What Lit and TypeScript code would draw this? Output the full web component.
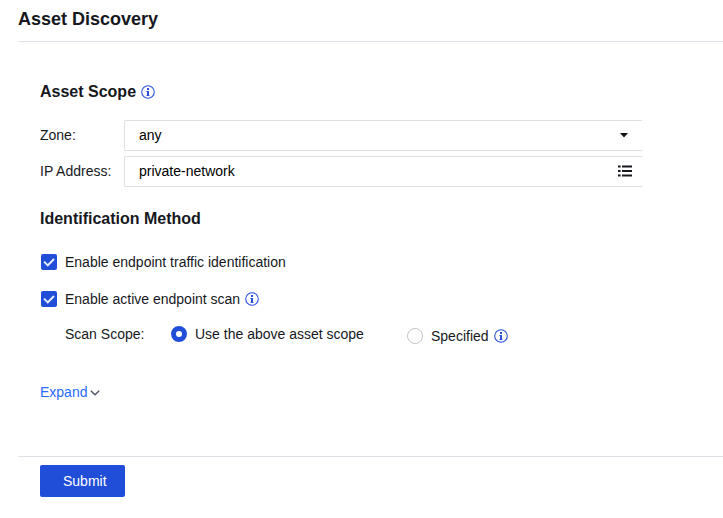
import { LitElement, html, css, svg } from "lit";
import { customElement, state } from "lit/decorators.js";

@customElement("info-icon")
export class InfoIcon extends LitElement {
  static styles = css`
    :host {
      display: inline-flex;
      flex: none;
      color: #2a50dc;
    }
    svg {
      display: block;
    }
  `;

  render() {
    return html`<svg width="14" height="14" viewBox="0 0 14 14" aria-hidden="true">
      ${svg`
        <circle cx="7" cy="7" r="6.3" fill="none" stroke="currentColor" stroke-width="1.1" />
        <path d="M6 3h2v2H6zM5.4 6H8v5H6V6.9h-.6zM5.4 10.3h3.2v.7H5.4z" fill="currentColor" />
      `}
    </svg>`;
  }
}

@customElement("app-root")
export class AppRoot extends LitElement {
  @state() private scope = "above";

  static styles = css`
    :host {
      display: block;
      background: #fff;
      color: #16181d;
      font: 14px/20px "Liberation Sans", Arial, sans-serif;
    }
    * {
      box-sizing: border-box;
    }
    .page {
      padding-left: 18px;
    }
    h1,
    h2 {
      margin: 0;
      font-weight: bold;
    }
    h1 {
      padding: 7px 0 10px;
      border-bottom: 1px solid #dfe1e9;
      font-size: 18px;
      line-height: 24px;
    }
    h2 {
      display: flex;
      align-items: center;
      gap: 5px;
      font-size: 16px;
    }
    .content {
      padding: 40px 81px 54px 22px;
    }
    .fields {
      display: grid;
      grid-template-columns: 84px 1fr;
      row-gap: 5px;
      align-items: center;
      margin: 18px 0 22px;
    }
    .fields > label {
      padding-bottom: 2px;
    }
    .control {
      display: flex;
      position: relative;
    }
    select,
    input[type="text"] {
      appearance: none;
      width: 100%;
      height: 31px;
      margin: 0;
      padding: 0 40px 2px 14px;
      border: 1px solid #dedfe1;
      border-right: 0;
      border-radius: 2px 0 0 2px;
      background: #fff;
      color: #000;
      font: inherit;
      outline: none;
    }
    .caret {
      position: absolute;
      right: 14px;
      top: 13px;
      pointer-events: none;
    }
    .picker {
      position: absolute;
      right: 10px;
      top: 9px;
      padding: 0;
      border: 0;
      background: none;
      color: #16181d;
    }
    svg {
      display: block;
    }
    .option,
    .choice {
      display: flex;
      align-items: center;
      gap: 8px;
    }
    .options {
      display: flex;
      flex-direction: column;
      gap: 17px;
      margin-top: 23px;
      padding-left: 1px;
    }
    .option info-icon,
    .choice info-icon {
      margin-left: -3px;
    }
    input[type="checkbox"],
    input[type="radio"] {
      appearance: none;
      flex: none;
      width: 16px;
      height: 16px;
      margin: 0;
    }
    input[type="checkbox"] {
      border: 1px solid #c4c6cc;
      border-radius: 2px;
    }
    input[type="checkbox"]:checked {
      border: 0;
      background: #204ed9
        url("data:image/svg+xml,%3Csvg xmlns='http://www.w3.org/2000/svg' viewBox='0 0 16 16'%3E%3Cpath d='M3 7.6l3.8 3.8L13 5' fill='none' stroke='%23e8edff' stroke-width='2'/%3E%3C/svg%3E")
        center / 16px 16px;
    }
    input[type="radio"] {
      border: 1px solid #c4c4c4;
      border-radius: 50%;
      background: #fff;
    }
    input[type="radio"]:checked {
      border: 5px solid #204ed9;
    }
    .scan {
      display: flex;
      align-items: flex-start;
      margin: 15px 0 0 25px;
    }
    .legend {
      width: 106px;
    }
    .wide {
      width: 236px;
    }
    .lower {
      padding-top: 2px;
    }
    .expand {
      display: flex;
      align-items: center;
      gap: 3px;
      margin-top: 36px;
      padding: 0;
      border: 0;
      background: none;
      color: #2a6cff;
      font: inherit;
    }
    .expand svg {
      margin-top: 2px;
    }
    .footer {
      padding: 8px 22px 21px;
      border-top: 1px solid #dfe1e9;
    }
    .submit {
      height: 32px;
      padding: 0 18px 0 23px;
      border: 0;
      border-radius: 2px;
      background: #204ed9;
      color: #fff;
      font: inherit;
    }
  `;

  private pick(e: Event) {
    this.scope = (e.target as HTMLInputElement).value;
  }

  render() {
    return html`
      <form class="page" @submit=${(e: Event) => e.preventDefault()}>
        <h1>Asset Discovery</h1>
        <div class="content">
          <h2>Asset Scope <info-icon></info-icon></h2>
          <div class="fields">
            <label for="zone">Zone:</label>
            <div class="control">
              <select id="zone">
                <option>any</option>
              </select>
              <svg class="caret" width="8" height="5" viewBox="0 0 8 5" aria-hidden="true">
                <path d="M0 0h8L4 4.6z" fill="#111" />
              </svg>
            </div>
            <label for="ip">IP Address:</label>
            <div class="control">
              <input id="ip" type="text" value="private-network" />
              <button class="picker" type="button" aria-label="Select address">
                <svg width="14" height="12" viewBox="0 0 14 12" aria-hidden="true">
                  <path d="M0 .5h2.6v2H0zM4 .5h10v2H4zM0 5h2.6v2H0zM4 5h10v2H4zM0 9.5h2.6v2H0zM4 9.5h10v2H4z" fill="currentColor" />
                </svg>
              </button>
            </div>
          </div>

          <h2>Identification Method</h2>
          <div class="options">
            <label class="option">
              <input type="checkbox" checked />
              <span>Enable endpoint traffic identification</span>
            </label>
            <label class="option">
              <input type="checkbox" checked />
              <span>Enable active endpoint scan</span>
              <info-icon></info-icon>
            </label>
          </div>
          <div class="scan" role="radiogroup" aria-labelledby="scan-label">
            <span class="legend" id="scan-label">Scan Scope:</span>
            <label class="choice wide">
              <input type="radio" name="scope" value="above" .checked=${this.scope === "above"} @change=${this.pick} />
              <span>Use the above asset scope</span>
            </label>
            <label class="choice lower">
              <input type="radio" name="scope" value="specified" .checked=${this.scope === "specified"} @change=${this.pick} />
              <span>Specified</span>
              <info-icon></info-icon>
            </label>
          </div>
          <button class="expand" type="button">
            Expand
            <svg width="10" height="6" viewBox="0 0 10 6" aria-hidden="true">
              <path d="M.8.8L5 4.8 9.2.8" fill="none" stroke="#4a5263" stroke-width="1.3" />
            </svg>
          </button>
        </div>
        <div class="footer">
          <button class="submit" type="submit">Submit</button>
        </div>
      </form>
    `;
  }
}
